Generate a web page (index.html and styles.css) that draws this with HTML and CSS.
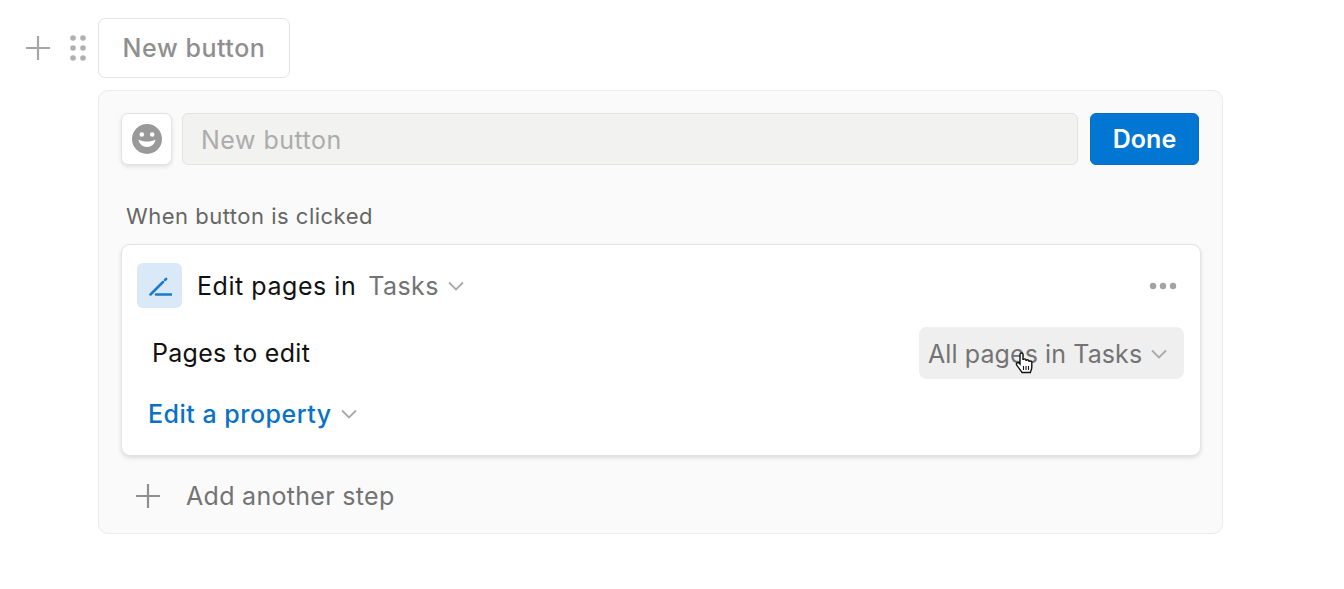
FILE: index.html
```html
<!DOCTYPE html>
<html lang="en">
<head>
    <meta charset="UTF-8">
    <title>New button</title>
    <link rel="stylesheet" href="styles.css">
</head>
<body>
    <div class="block-row">
        <svg class="plus-icon" viewBox="0 0 24 24"><path d="M12 0v24M0 12h24"/></svg>
        <svg class="drag-icon" viewBox="0 0 16 26">
            <circle cx="3" cy="3" r="2.8"/><circle cx="13" cy="3" r="2.8"/>
            <circle cx="3" cy="13" r="2.8"/><circle cx="13" cy="13" r="2.8"/>
            <circle cx="3" cy="23" r="2.8"/><circle cx="13" cy="23" r="2.8"/>
        </svg>
        <div class="new-button">New button</div>
    </div>

    <div class="panel">
        <!-- Name row -->
        <div class="name-row">
            <div class="emoji-btn">
                <svg viewBox="0 0 30 30">
                    <circle cx="15" cy="15" r="15" fill="#999"/>
                    <circle cx="9.8" cy="10.5" r="2.3" fill="#fff"/>
                    <circle cx="20.2" cy="10.5" r="2.3" fill="#fff"/>
                    <path d="M6.5 15.5c2.5 1.5 5.5 2 8.5 2s6-.5 8.500-2c-.5 4.500-4.300 7.500-8.500 7.500s-8-3-8.500-7.500z" fill="#fff"/>
                </svg>
            </div>
            <div class="name-input">New button</div>
            <button class="done-btn">Done</button>
        </div>

        <div class="section-label">When button is clicked</div>

        <!-- Step card -->
        <div class="step-card">
            <div class="step-head">
                <div class="step-icon">
                    <svg viewBox="0 0 24 20"><path d="M2.5 18.5 15 6"/><path d="M17 4l1.2-1.2"/><path d="M8 18.5h15.5"/></svg>
                </div>
                <span class="step-title">Edit pages in</span>
                <span class="step-db">Tasks</span>
                <svg class="chevron" viewBox="0 0 16 10"><path d="M1 1.5l7 7 7-7"/></svg>
                <svg class="more-icon" viewBox="0 0 28 8">
                    <circle cx="4" cy="4" r="3.2"/><circle cx="14" cy="4" r="3.2"/><circle cx="24" cy="4" r="3.2"/>
                </svg>
            </div>
            <div class="step-row">
                <span class="row-label">Pages to edit</span>
                <div class="select-box">
                    <span>All pages in Tasks</span>
                    <svg class="chevron" viewBox="0 0 16 10"><path d="M1 1.5l7 7 7-7"/></svg>
                    <svg class="hand-cursor" viewBox="0 0 18 24">
                        <path d="M5 13V3.5c0-2 3-2 3 0V9c0-1.500 3-1.500 3 0v1c0-1.500 3-1.500 3 0v1c0-1.300 2.800-1.300 2.800.3v4.700c0 2.500-.8 3.500-1.500 5.500H7c-1-2-3.500-4.500-5.300-7.500-1-1.800 1.300-3.300 2.600-1.800z" fill="#fff" stroke="#111" stroke-width="1.4"/>
                        <path d="M8.500 15v4M11 15v4M13.500 15v4" stroke="#111" stroke-width="1.1" fill="none"/>
                    </svg>
                </div>
            </div>
            <div class="property-row">
                <span class="property-link">Edit a property</span>
                <svg class="chevron" viewBox="0 0 16 10"><path d="M1 1.5l7 7 7-7"/></svg>
            </div>
        </div>

        <div class="add-step">
            <svg class="plus-icon" viewBox="0 0 24 24"><path d="M12 0v24M0 12h24"/></svg>
            <span>Add another step</span>
        </div>
    </div>
</body>
</html>
```

FILE: styles.css
```css
* {
    box-sizing: border-box;
    margin: 0;
    padding: 0;
}

body {
    font-family: 'Inter', 'Liberation Sans', sans-serif;
    background-color: #fff;
    padding: 18px 120px 0 26px;
    overflow: hidden;
    height: 589px;
}

/* Top block row */
.block-row {
    display: flex;
    align-items: center;
    height: 60px;
}

.plus-icon {
    width: 24px;
    height: 24px;
    flex-shrink: 0;
    fill: none;
    stroke: #a6a6a6;
    stroke-width: 2.2;
}

.drag-icon {
    width: 16px;
    height: 26px;
    margin-left: 20px;
    fill: #b0b0b0;
}

.new-button {
    margin-left: 12px;
    width: 192px;
    height: 60px;
    border: 1px solid #e3e3e3;
    border-radius: 7px;
    display: flex;
    align-items: center;
    justify-content: center;
    font-size: 25px;
    font-weight: 500;
    letter-spacing: 0.55px;
    color: #8f8f8f;
}

/* Panel */
.panel {
    margin-top: 12px;
    margin-left: 72px;
    width: 1125px;
    height: 444px;
    background-color: #fafafa;
    border: 1px solid #ebebeb;
    border-radius: 10px;
    padding: 22px 22px 0 22px;
}

.name-row {
    display: flex;
    align-items: center;
    height: 52px;
}

.emoji-btn {
    width: 51px;
    height: 52px;
    background-color: #fff;
    border: 1px solid #e3e3e3;
    border-radius: 7px;
    box-shadow: 0 2px 4px rgba(0, 0, 0, 0.1);
    display: flex;
    align-items: center;
    justify-content: center;
}

.emoji-btn svg {
    width: 30px;
    height: 30px;
}

.name-input {
    margin-left: 10px;
    width: 896px;
    height: 52px;
    background-color: #f2f2f0;
    border: 1px solid #e3e3e1;
    border-radius: 6px;
    padding-left: 18px;
    padding-top: 2px;
    display: flex;
    align-items: center;
    font-size: 25px;
    letter-spacing: 0.5px;
    color: #acacac;
}

.done-btn {
    margin-left: 12px;
    width: 109px;
    height: 52px;
    background-color: #0176d3;
    color: #fff;
    border: 1px solid #0a6cbc;
    border-radius: 6px;
    font-family: inherit;
    font-size: 25px;
    font-weight: 600;
}

.section-label {
    margin-top: 38px;
    padding-left: 5px;
    font-size: 22px;
    line-height: 26px;
    letter-spacing: 0.5px;
    color: #666;
}

/* Step card */
.step-card {
    margin-top: 15px;
    width: 1080px;
    height: 212px;
    background-color: #fff;
    border: 1px solid #e3e3e3;
    border-radius: 9px;
    box-shadow: 0 2px 4px rgba(0, 0, 0, 0.12);
    padding: 18px 15px 0 15px;
}

.step-head {
    display: flex;
    align-items: center;
    height: 45px;
}

.step-icon {
    width: 45px;
    height: 45px;
    background-color: #d9e9f7;
    border-radius: 6px;
    display: flex;
    align-items: center;
    justify-content: center;
}

.step-icon svg {
    width: 24px;
    height: 20px;
    fill: none;
    stroke: #1a7bc8;
    stroke-width: 2.5;
    stroke-linecap: round;
}

.step-title {
    margin-left: 15px;
    font-size: 25px;
    letter-spacing: 0.55px;
    color: #111;
}

.step-db {
    margin-left: 12px;
    font-size: 25px;
    letter-spacing: 0.4px;
    color: #737373;
}

.chevron {
    width: 16px;
    height: 10px;
    margin-left: 9px;
    flex-shrink: 0;
    fill: none;
    stroke: #a9a9a9;
    stroke-width: 1.8;
}

.more-icon {
    width: 28px;
    height: 8px;
    margin-left: auto;
    margin-right: 8px;
    fill: #a3a3a3;
}

.step-row {
    display: flex;
    align-items: center;
    justify-content: space-between;
    margin-top: 19px;
    height: 52px;
    padding-left: 15px;
    padding-right: 1px;
}

.row-label {
    font-size: 25px;
    letter-spacing: 0.3px;
    color: #111;
}

.select-box {
    position: relative;
    width: 265px;
    height: 52px;
    background-color: #efefef;
    border-radius: 8px;
    display: flex;
    align-items: center;
    padding-left: 9px;
    padding-top: 2px;
    font-size: 25px;
    letter-spacing: 0.1px;
    color: #737373;
}

.hand-cursor {
    position: absolute;
    left: 96px;
    top: 24px;
    width: 18px;
    height: 24px;
}

.property-row {
    display: flex;
    align-items: center;
    margin-top: 9px;
    height: 52px;
    padding-left: 11px;
}

.property-link {
    font-size: 25px;
    font-weight: 500;
    letter-spacing: 0.5px;
    color: #0a72c4;
}

.add-step {
    display: flex;
    align-items: center;
    height: 40px;
    margin-top: 20px;
    padding-left: 15px;
    font-size: 25px;
    letter-spacing: 0.3px;
    color: #737373;
}

.add-step .plus-icon {
    stroke: #8f8f8f;
}

.add-step span {
    margin-left: 26px;
}
```
